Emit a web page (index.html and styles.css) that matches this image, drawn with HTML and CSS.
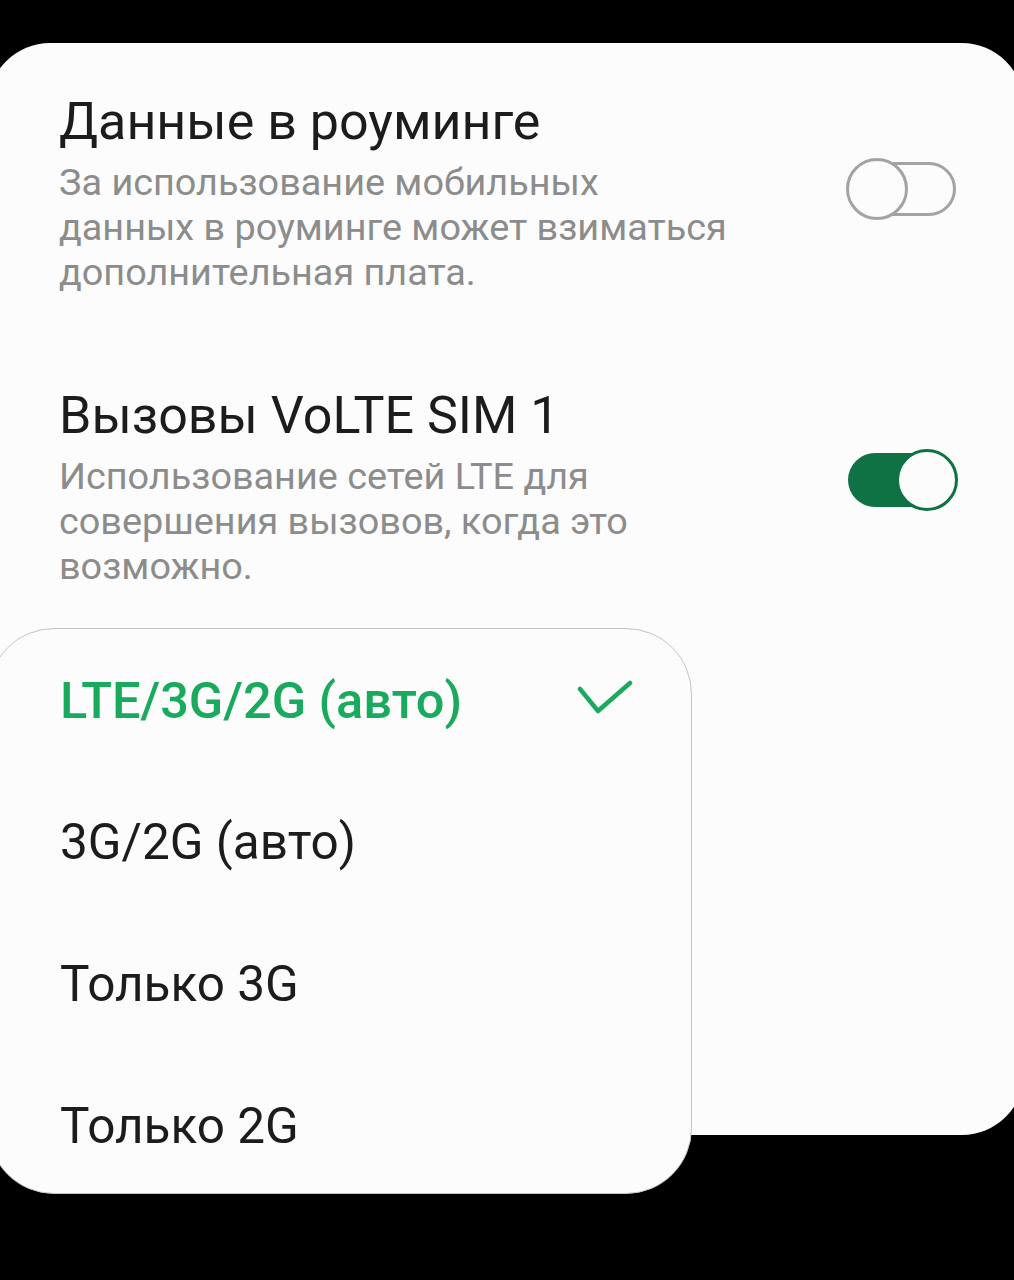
FILE: index.html
```html
<!DOCTYPE html>
<html lang="ru">
<head>
<meta charset="utf-8">
<link rel="stylesheet" href="styles.css">
</head>
<body>
<div class="card">
  <div class="row">
    <div class="texts">
      <div class="title">Данные в роуминге</div>
      <div class="sub">За использование мобильных<br>данных в роуминге может взиматься<br>дополнительная плата.</div>
    </div>
    <div class="switch off"><span class="track"></span><span class="thumb"></span></div>
  </div>
  <div class="row row2">
    <div class="texts">
      <div class="title">Вызовы VoLTE SIM 1</div>
      <div class="sub">Использование сетей LTE для<br>совершения вызовов, когда это<br>возможно.</div>
    </div>
    <div class="switch on"><span class="track"></span><span class="thumb"></span></div>
  </div>
</div>
<div class="popup">
  <div class="item selected"><span>LTE/3G/2G (авто)</span>
    <svg class="check" width="56" height="40" viewBox="0 0 56 40"><polyline points="3,9 21,31 53,3" fill="none" stroke="#1aaa5e" stroke-width="4.5" stroke-linecap="round" stroke-linejoin="round"/></svg>
  </div>
  <div class="item"><span>3G/2G (авто)</span></div>
  <div class="item"><span>Только 3G</span></div>
  <div class="item"><span>Только 2G</span></div>
</div>
</body>
</html>
```
FILE: styles.css
```css
html, body {
  margin: 0;
  padding: 0;
  background: #000;
}
body {
  width: 1014px;
  height: 1280px;
  overflow: hidden;
  position: relative;
  font-family: Roboto, "Noto Sans", sans-serif;
}
.card {
  margin-top: 43px;
  margin-left: -12px;
  width: 1036px;
  height: 1092px;
  box-sizing: border-box;
  background: #fcfcfc;
  border-radius: 62px;
  padding: 50px 0 0 71px;
}
.row {
  display: flex;
  align-items: flex-start;
  justify-content: space-between;
  padding-right: 66px;
}
.row2 {
  margin-top: 92px;
}
.title {
  font-size: 52px;
  color: #1c1c1c;
  line-height: 58px;
}
.sub {
  font-size: 37.8px;
  color: #8c8c8c;
  line-height: 45px;
  margin-top: 9px;
}
.switch {
  position: relative;
  flex-shrink: 0;
  width: 112px;
  height: 62px;
  margin-top: 65px;
}
.row2 .switch {
  margin-top: 62px;
}
.switch .track {
  position: absolute;
  left: 2px;
  right: 2px;
  top: 4px;
  bottom: 4px;
  border-radius: 30px;
  box-sizing: border-box;
}
.switch .thumb {
  position: absolute;
  top: 0;
  width: 62px;
  height: 62px;
  border-radius: 50%;
  box-sizing: border-box;
  background: #fcfcfc;
}
.switch.off .track {
  border: 3px solid #a3a3a3;
}
.switch.off .thumb {
  left: 0;
  border: 3px solid #a3a3a3;
}
.switch.on .track {
  background: #0f7244;
}
.switch.on .thumb {
  right: 0;
  border: 3px solid #0f7244;
}
.popup {
  position: absolute;
  left: -12px;
  top: 628px;
  width: 704px;
  height: 566px;
  box-sizing: border-box;
  background: #fcfcfc;
  border: 1px solid #c4c4c4;
  border-radius: 66px;
  padding: 0 58px 0 71px;
  display: flex;
  flex-direction: column;
}
.item {
  flex-shrink: 0;
  height: 142px;
  display: flex;
  align-items: center;
  justify-content: space-between;
  font-size: 49.5px;
  color: #1c1c1c;
}
.item.selected {
  color: #1aaa5e;
  font-weight: 500;
  font-size: 50.5px;
}
.check {
  display: block;
}
```
